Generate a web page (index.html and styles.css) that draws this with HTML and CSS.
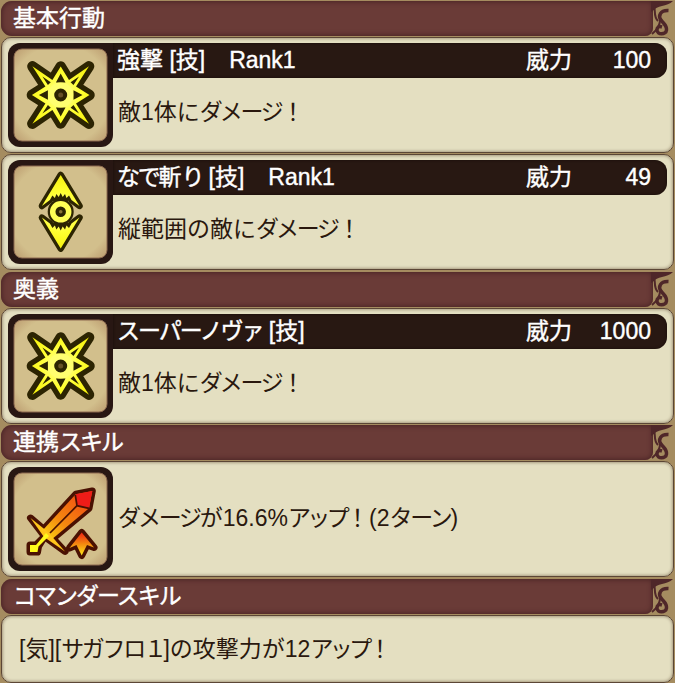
FILE: index.html
```
<!DOCTYPE html>
<html lang="ja">
<head>
  <meta charset="utf-8">
  <title>スキル</title>
  <link rel="stylesheet" href="styles.css">
</head>
<body>
  <svg class="defs" width="0" height="0">
    <defs>
      <radialGradient id="yellow" gradientUnits="userSpaceOnUse" cx="52.7" cy="52" r="40">
        <stop offset="0.2" stop-color="#ffff80"/>
        <stop offset="0.5" stop-color="#ffff32"/>
        <stop offset="1" stop-color="#f4ee08"/>
      </radialGradient>
      <linearGradient id="fire" gradientUnits="userSpaceOnUse" x1="76" y1="26" x2="26" y2="80">
        <stop offset="0" stop-color="#f04a12"/>
        <stop offset="0.5" stop-color="#f58a10"/>
        <stop offset="1" stop-color="#ffff14"/>
      </linearGradient>
      <linearGradient id="fire-up" x1="0" y1="0" x2="0" y2="1">
        <stop offset="0" stop-color="#ee2412"/>
        <stop offset="0.5" stop-color="#f58a10"/>
        <stop offset="1" stop-color="#ffe818"/>
      </linearGradient>
      <radialGradient id="plate" r="0.72">
        <stop offset="0.75" stop-color="#d2bf8c"/>
        <stop offset="1" stop-color="#b9986c"/>
      </radialGradient>
      <symbol id="star" viewBox="0 0 105 104">
        <path fill="url(#yellow)" stroke="#2c2402" stroke-width="10.5" stroke-linejoin="round" paint-order="stroke" d="M52.7 23.5L61 37L81 23.300L68 43.5L81.5 52L68 60.5L81 80.700L61 67L52.7 80.5L44.4 67L24.400 80.700L37.4 60.5L23.9 52L37.4 43.5L24.400 23.300L44.4 37Z"/>
        <path fill="#2c2402" d="M52.7 30.5L57.5 39.5H47.9ZM52.7 73.5L57.5 64.5H47.9ZM74.5 52L65.5 47.2V56.8ZM30.9 52L39.9 47.2V56.8ZM71 33.5L65.5 42L62.6 39.2ZM34.4 33.5L39.9 42L42.8 39.2ZM71 70.5L65.5 62L62.6 64.8ZM34.4 70.5L39.9 62L42.8 64.8Z"/>
        <circle cx="52.7" cy="52" r="9.5" fill="#2c2402" stroke="#ffff70" stroke-width="6"/>
        <circle cx="52.7" cy="52" r="2.5" fill="#665126"/>
      </symbol>
      <symbol id="column" viewBox="0 0 105 104">
        <g fill="url(#yellow)" stroke="#2c2402" stroke-width="6.5" stroke-linejoin="round" paint-order="stroke">
          <path d="M52.7 15L71.5 46L63.5 40L61 35.5L58.5 38L57 34L54.7 37L52.7 33L50.7 37L48.4 34L46.9 38L44.4 35.5L41.9 40L33.9 46Z"/>
          <path d="M52.7 88.6L71.5 57.6L63.5 63.6L61 68.1L58.5 65.6L57 69.6L54.7 66.6L52.7 70.6L50.7 66.6L48.4 69.6L46.9 65.6L44.4 68.1L41.9 63.6L33.9 57.6Z"/>
        </g>
        <circle cx="52.7" cy="51.8" r="13" fill="#2c2402"/>
        <circle cx="52.7" cy="51.8" r="8" fill="#2c2402" stroke="#ffff55" stroke-width="5.5"/>
        <circle cx="52.7" cy="51.8" r="1.8" fill="#8a7436"/>
      </symbol>
      <symbol id="sword" viewBox="0 0 105 104">
        <g fill="#4a1102" stroke="#4a1102" stroke-width="7" stroke-linejoin="round">
          <path d="M67.7 27.3L84.3 24L81 41.3L43 73L34 64Z"/>
          <path d="M22.5 51L40 66L57 84.5L37 70ZM37 69L28 78H22V85H29.5L30.5 79.5Z"/>
          <path d="M73.7 65.5L86 80.5L79 78L73.7 88.5L68.5 78L61.5 81Z"/>
        </g>
        <path fill="url(#fire)" d="M67.7 27.3L84.3 24L81 41.3L43 73L34 64Z"/>
        <path fill="#ee1c18" d="M67.7 27.3L84.3 24L81 41.3L69 38.5Z"/>
        <path fill="none" stroke="#4a1102" stroke-width="1.7" d="M67.3 28L69 38.7L81 41.3M69 38.7L42 66M31 61L46 76"/>
        <path fill="#ffc51b" d="M22.5 51L40 65L57 84.5L36 70Z"/>
        <path fill="#fff91a" d="M38 66L41 69L30.5 79.5L29.5 85H22V78L28 78Z"/>
        <path fill="url(#fire-up)" d="M73.7 65.5L86 80.5L79 78L73.7 88.5L68.5 78L61.5 81Z"/>
      </symbol>
      <symbol id="ornament" viewBox="0 0 24 35">
        <path fill="#4f2729" d="M0 0H22C19 3 15 4 11 5C7 6 4 7 3 9L0 11Z"/>
        <path fill="none" stroke="#4f2729" stroke-width="3.5" d="M17.5 9.5C9 9 7 15 10 19C12 22 16 24 15.5 29C15 34 6 34 6 29C6 26 8 25 11 26"/>
        <path fill="none" stroke="#4f2729" stroke-width="2" d="M3 5C5 10 2 15 7 20M1 33C6 29 9 25 9 19"/>
      </symbol>
    </defs>
  </svg>

  <h2 class="title"><span>基本行動</span><svg class="ornament"><use href="#ornament"/></svg></h2>
  <div class="card">
    <div class="icon"><svg><rect class="plate" x="6" y="6" width="93" height="92" rx="8"/><use href="#star"/></svg></div>
    <div class="detail">
      <div class="bar"><span class="name">強撃 [技]<span class="rank">　Rank1</span></span><span>威力</span><span class="power">100</span></div>
      <p>敵1体に<span class="kana">ダメージ</span>！</p>
    </div>
  </div>
  <div class="card">
    <div class="icon"><svg><rect class="plate" x="6" y="6" width="93" height="92" rx="8"/><use href="#column"/></svg></div>
    <div class="detail">
      <div class="bar"><span class="name"><span class="kana">なで</span>斬<span class="kana">り</span> [技]<span class="rank">　Rank1</span></span><span>威力</span><span class="power">49</span></div>
      <p>縦範囲の敵に<span class="kana">ダメージ</span>！</p>
    </div>
  </div>

  <h2 class="title"><span>奥義</span><svg class="ornament"><use href="#ornament"/></svg></h2>
  <div class="card">
    <div class="icon"><svg><rect class="plate" x="6" y="6" width="93" height="92" rx="8"/><use href="#star"/></svg></div>
    <div class="detail">
      <div class="bar"><span class="name"><span class="kana wide">スーパーノヴァ</span> [技]</span><span>威力</span><span class="power">1000</span></div>
      <p>敵1体に<span class="kana">ダメージ</span>！</p>
    </div>
  </div>

  <h2 class="title"><span>連携<span class="kana wide">スキル</span></span><svg class="ornament"><use href="#ornament"/></svg></h2>
  <div class="card">
    <div class="icon round"><svg><rect class="plate" x="6" y="6" width="93" height="92" rx="8"/><use href="#sword"/></svg></div>
    <div class="detail middle">
      <p><span class="kana">ダメージ</span>が16.6%<span class="kana narrow">アップ</span>！(2<span class="kana">ターン</span>)</p>
    </div>
  </div>

  <h2 class="title"><span class="kana wide">コマンダースキル</span><svg class="ornament"><use href="#ornament"/></svg></h2>
  <div class="card commander">
    <p>[気][<span class="kana">サガフロ</span><span class="kana narrow">１</span>]の攻撃力が12<span class="kana narrow">アップ</span>！</p>
  </div>
</body>
</html>
```

FILE: styles.css
```
* {
  box-sizing: border-box;
}

html {
  overflow: hidden;
}

body {
  display: flow-root;
  margin: 0;
  padding: 0 1px;
  height: 683px;
  background-color: #a58c60;
  color: #2a180e;
  font-family: "Liberation Sans", "Noto Sans CJK JP", sans-serif;
  font-size: 23px;
  line-height: 34px;
}

.defs {
  position: absolute;
}

.kana {
  letter-spacing: -2.3px;
}

.kana.wide {
  letter-spacing: -2px;
}

.kana.narrow {
  letter-spacing: -3.6px;
}

.title {
  display: flex;
  justify-content: space-between;
  width: 652px;
  height: 35px;
  margin: 1.4px 0 1px;
  padding-left: 12px;
  border-radius: 11px 0 8px 11px;
  background-color: #6a3b37;
  box-shadow: inset 0 0 5px 1px #4b2426;
  color: #fff;
  font-size: 23px;
  font-weight: normal;
  -webkit-text-stroke: 0.4px #fff;
}

.ornament {
  flex: none;
  width: 24px;
  height: 35px;
  margin-right: -22px;
}

.card {
  display: flex;
  height: 116px;
  margin: 0 0 1px;
  padding: 5px 6px 0 6px;
  border: 1px solid #5b4635;
  border-radius: 10px;
  background-color: #e4dfc1;
  box-shadow: inset 0 0 3px 1px #a79b80;
}

.icon {
  flex: none;
  width: 105px;
  height: 104px;
  border-radius: 12px 0 12px 12px;
  background-color: #281713;
}

.icon.round {
  border-radius: 12px;
}

.icon svg {
  display: block;
  width: 105px;
  height: 104px;
}

.plate {
  fill: url(#plate);
  stroke: #8d6a50;
  stroke-width: 1px;
}

.detail {
  flex: 1;
}

.bar {
  display: flex;
  height: 35px;
  padding: 0 16px 0 4px;
  border-radius: 0 12px 12px 0;
  background-color: #281812;
  box-shadow: inset 0 0 3px #180e09;
  color: #fff;
  -webkit-text-stroke: 0.4px #fff;
}

.name {
  flex: 1;
}

.rank {
  margin-left: 1px;
}

.power {
  width: 79px;
  text-align: right;
}

p {
  margin: 0;
}

.detail p {
  padding: 17px 0 0 5px;
}

.middle p {
  padding-top: 34px;
}

.commander {
  height: 68px;
  padding: 16px 0 0 17px;
}
```
